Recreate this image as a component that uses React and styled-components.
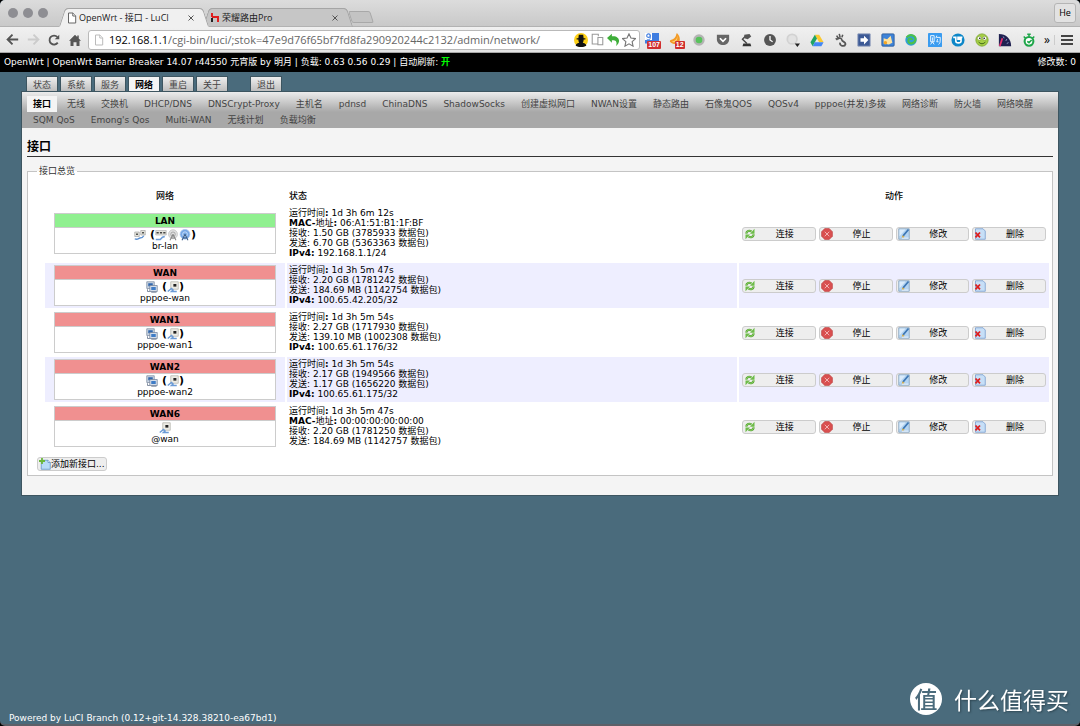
import React from 'react';
import styled, { createGlobalStyle, ThemeProvider } from 'styled-components';

const theme = {
    ui: '"DejaVu Sans", Verdana, "Noto Sans CJK SC", sans-serif',
    chrome: '"Open Sans", "Noto Sans CJK SC", sans-serif',
    page: '#4a6b7c',
    panel: '#f4f4f4',
    up: '#90f090',
    down: '#f09090',
    stripe: '#eeeeff',
};

const GlobalStyle = createGlobalStyle`
    * {
        box-sizing: border-box;
    }
    html {
        background: #000;
    }
    body {
        margin: 0;
        font-family: ${theme.ui};
        font-size: 9px;
        line-height: 10px;
        color: #000;
    }
    button, input {
        font: inherit;
        color: inherit;
        margin: 0;
        padding: 0;
    }
    svg {
        display: block;
        flex: none;
    }
`;

const Shell = styled.div`
    display: flex;
    flex-direction: column;
    min-height: 100vh;
    border-radius: 5px;
    overflow: hidden;
    background: ${props => props.theme.page};
    border-bottom: 2px solid #5d6068;
`;

/* browser chrome */

const TabStrip = styled.div`
    display: flex;
    align-items: flex-end;
    height: 27px;
    padding: 0 4px 0 8px;
    font-family: ${props => props.theme.chrome};
    background: linear-gradient(#dcdcdc, #c9c9c9);
    border-bottom: 1px solid #b2b2b2;
`;

const Lights = styled.div`
    display: flex;
    gap: 5px;
    align-self: center;
    margin-right: 14px;
    span {
        width: 10px;
        height: 10px;
        border-radius: 50%;
        background: #8e8e93;
    }
`;

const Tab = styled.div`
    position: relative;
    display: flex;
    align-items: center;
    width: 144px;
    height: 19px;
    margin-bottom: -1px;
    padding: 0 12px 0 5px;
    color: #222;
    z-index: ${props => (props.$active ? 2 : 1)};
    :before, :after {
        content: '';
        position: absolute;
        z-index: -1;
        top: 0;
        bottom: 0;
        width: 60%;
        background: ${props => (props.$active ? '#f0f0f0' : '#c6c6c6')};
        border: 1px solid #a5a5a5;
        border-bottom-color: ${props => (props.$active ? '#f0f0f0' : '#b2b2b2')};
    }
    :before {
        left: 0;
        border-right: 0;
        border-radius: 4px 0 0 0;
        transform: skewX(-18deg);
    }
    :after {
        right: 0;
        border-left: 0;
        border-radius: 0 4px 0 0;
        transform: skewX(18deg);
    }
    span {
        flex: 1;
        margin-left: 2px;
        white-space: nowrap;
    }
`;

const CloseButton = styled.button`
    border: 0;
    background: none;
`;

const NewTab = styled.button`
    width: 22px;
    height: 12px;
    margin: 0 0 3px;
    border: 1px solid #a8a8a8;
    border-radius: 2px;
    background: #c3c3c3;
    transform: skewX(18deg);
`;

const UserButton = styled.button`
    align-self: center;
    width: 22px;
    height: 20px;
    margin-left: auto;
    border: 1px solid #b5b5b5;
    border-radius: 3px;
    background: #e2e2e2;
`;

const Toolbar = styled.div`
    display: flex;
    align-items: center;
    height: 26px;
    padding: 0 7px 0 6px;
    background: linear-gradient(#f0f0f0, #e3e3e3);
    border-bottom: 1px solid #a8a8a8;
`;

const IconButton = styled.button`
    display: flex;
    margin-right: ${props => props.$gap || 0}px;
    border: 0;
    background: none;
`;

const Omnibox = styled.div`
    display: flex;
    flex: 1;
    align-items: center;
    height: 20px;
    padding: 0 3px 0 5px;
    margin-right: 4px;
    border: 1px solid #b9b9b9;
    border-radius: 3px;
    background: #fff;
    font-family: ${props => props.theme.chrome};
    font-size: 11px;
    line-height: 16px;
    label {
        margin-left: 5px;
    }
    input {
        flex: 1;
        min-width: 0;
        border: 0;
        outline: 0;
        color: #666;
        background: none;
    }
`;

const Extensions = styled.div`
    display: flex;
    justify-content: space-between;
    width: 393px;
    margin-right: 7px;
`;

const More = styled.button`
    width: 11px;
    margin-right: 6px;
    border: 0;
    border-right: 1px solid #ccc;
    background: none;
    text-align: left;
    font-family: ${props => props.theme.chrome};
    font-size: 12px;
`;

/* LuCI page */

const StatusBar = styled.header`
    display: flex;
    justify-content: space-between;
    padding: 4px 4px 5px;
    background: #000;
    color: #fff;
    a {
        color: #0f0;
        font-weight: bold;
        text-decoration: none;
    }
`;

const MainMenu = styled.nav`
    display: flex;
    gap: 4px;
    margin: 4px 27px 0;
    a {
        padding: 3px 6px 2px;
        border: 1px solid #3d5560;
        border-bottom: 0;
        margin: 0 -1px;
        background: linear-gradient(#eee, #bbb);
        color: #444;
        text-decoration: none;
    }
    a.active {
        background: ${props => props.theme.panel};
        color: #000;
        font-weight: bold;
    }
    a.logout {
        margin-left: 19px;
    }
`;

const Panel = styled.main`
    margin: 0 22px;
    background: ${props => props.theme.panel};
    box-shadow: 0 0 0 1px #3d5560;
`;

const SubMenu = styled.nav`
    display: flex;
    flex-wrap: wrap;
    column-gap: 4px;
    padding: 4px 5px 0;
    background: linear-gradient(#ececec, #a8a8a8 20px);
    a {
        padding: 3px 6px;
        color: #444;
        text-decoration: none;
        white-space: nowrap;
    }
    a.active {
        background: ${props => props.theme.panel};
        color: #000;
        font-weight: bold;
    }
`;

const Content = styled.div`
    padding: 11px 5px 19px;
    h2 {
        margin: 0 0 8px;
        border-bottom: 1px solid #333;
        font-size: 12px;
        line-height: 17px;
    }
`;

const Section = styled.fieldset`
    min-width: 0;
    margin: 0;
    padding: 9px 1px 4px 9px;
    border: 1px solid #c4c4c4;
    background: #fff;
    legend {
        padding: 0 2px;
        line-height: 12px;
        color: #333;
    }
`;

const InterfaceTable = styled.table`
    width: calc(100% - 6px);
    margin-left: 6px;
    table-layout: fixed;
    border-collapse: separate;
    border-spacing: 2px;
    th {
        padding: 3px 2px;
        font-weight: 500;
    }
    th:nth-child(2) {
        text-align: left;
    }
    td {
        padding: 2px;
    }
    td:nth-child(2) {
        padding-bottom: 3px;
    }
    .network {
        width: 24%;
    }
    .actions {
        width: 31%;
    }
`;

const InterfaceRow = styled.tr`
    background: ${props => (props.$striped ? props.theme.stripe : '#fff')};
`;

const NetworkBox = styled.div`
    margin: 0 7px;
    padding-bottom: 2px;
    border: 1px solid #ccc;
    background: #fff;
    text-align: center;
    strong {
        display: block;
        padding: 2px 0 1px;
        border-bottom: 1px solid #ccc;
        background: ${props => (props.$up ? props.theme.up : props.theme.down)};
    }
`;

const DeviceIcons = styled.div`
    display: flex;
    justify-content: center;
    align-items: center;
    height: 13px;
    font-weight: bold;
    font-size: 11px;
    span {
        margin-left: 4px;
    }
`;

const Status = styled.div`
    white-space: nowrap;
`;

const Actions = styled.div`
    display: flex;
    gap: 3px;
    padding: 0 1px;
`;

const Button = styled.button`
    display: flex;
    align-items: center;
    flex: ${props => (props.$fill ? 1 : 'none')};
    height: 14px;
    padding: 0 1px;
    border: 1px solid #ccc;
    border-radius: 3px;
    background: #eee;
    span {
        flex: 1;
        text-align: center;
        white-space: nowrap;
    }
`;

const AddRow = styled.div`
    display: flex;
    margin-top: 6px;
`;

const Footer = styled.footer`
    margin-top: auto;
    padding: 0 9px 1px;
    color: #fff;
`;

const Watermark = styled.div`
    position: fixed;
    right: 11px;
    bottom: 11px;
    display: flex;
    align-items: center;
    gap: 12px;
    color: #fff;
    font-family: "Noto Sans CJK SC", sans-serif;
    font-size: 23px;
    line-height: 32px;
    text-shadow: 1px 1px 2px #2c4450;
    b {
        width: 32px;
        height: 32px;
        border-radius: 50%;
        background: #fff;
        color: ${props => props.theme.page};
        font-size: 23px;
        font-weight: 500;
        line-height: 31px;
        text-align: center;
        text-shadow: none;
    }
`;

const Svg = ({ size = 12, box = 16, children }) => (
    <svg width={size} height={size} viewBox={`0 0 ${box} ${box}`} aria-hidden="true">{children}</svg>
);

const PageIcon = ({ color = '#666' }) => (
    <svg width="10" height="12" viewBox="0 0 10 12" fill="#fff" stroke={color} aria-hidden="true">
        <path d="M1.5 1h4.5l2.7 2.8v7.2H1.5z" />
        <path d="M5.8 1v3h2.9" />
    </svg>
);

const actionIcons = {
    connect: (
        <Svg>
            <path d="M3 7.5C3.500 4 7 2.800 10 4.500" fill="none" stroke="#5aa637" strokeWidth="3" />
            <path d="M3 7.5C3.500 4 7 2.800 10 4.500" fill="none" stroke="#9bdc78" strokeWidth="1" />
            <path d="M14 1v6.500H8z" fill="#6cbb48" />
            <path d="M13 8.500C12.500 12 9 13.200 6 11.500" fill="none" stroke="#5aa637" strokeWidth="3" />
            <path d="M13 8.500C12.500 12 9 13.200 6 11.500" fill="none" stroke="#9bdc78" strokeWidth="1" />
            <path d="M2 15V8.500h6z" fill="#6cbb48" />
        </Svg>
    ),
    stop: (
        <Svg>
            <path d="M5 .8h6L15.200 5v6L11 15.200H5L.8 11V5z" fill="#d94f4f" stroke="#c05050" strokeLinejoin="round" />
            <path d="M5 5l6 6M11 5l-6 6" stroke="#f3b4b4" strokeWidth="1.300" />
        </Svg>
    ),
    edit: (
        <Svg>
            <path d="M1 1h14v14H1z" fill="#b5d5f3" stroke="#7f9bb5" />
            <path d="M2 2h8L2 11z" fill="#dcecfb" />
            <path d="M14 2L7.500 9.500 6 13" fill="none" stroke="#3f78b4" strokeWidth="2.400" />
            <path d="M5 13.500l1-4 3 2.500z" fill="#e8b64a" />
            <path d="M5 13.500h9" stroke="#e9f3fd" strokeWidth="1.400" />
        </Svg>
    ),
    remove: (
        <Svg>
            <path d="M2 1h10l3 3v11H2z" fill="#c7dff7" stroke="#6f95cc" />
            <path d="M2 6l6 6.500M8 6l-6 6.500" stroke="#dd1f1f" strokeWidth="2.400" />
        </Svg>
    ),
    add: (
        <Svg>
            <path d="M3 3h9l3 3v9H3z" fill="#b8dcf8" stroke="#5a8fc4" />
            <path d="M12 3v3h3" fill="#fff" stroke="#5a8fc4" />
            <path d="M4 0v8M0 4h8" stroke="#6bb83a" strokeWidth="2.400" />
        </Svg>
    ),
};

const deviceIcons = {
    bridge: (
        <Svg>
            <path d="M1 4h6v6H1zM9 2h6v6H9z" fill="#e4e4dc" stroke="#999" strokeWidth=".8" />
            <path d="M3 6h2v2H3zM11 4h2v2h-2z" fill="#222" />
            <path d="M1 13c4 2 5-1 7-1s4-1 5-3" stroke="#5b8fd0" strokeWidth="1.800" fill="none" />
        </Svg>
    ),
    lanSwitch: (
        <Svg>
            <path d="M1 2h14v6H1z" fill="#e4e4dc" stroke="#aaa" strokeWidth=".8" />
            <path d="M2 4h3v2H2zM6.500 4h3v2h-3zM11 4h3v2h-3z" fill="#444" />
            <path d="M1 14h6l3-3 3-1" stroke="#6b9bd6" strokeWidth="2" fill="none" />
        </Svg>
    ),
    wifiOff: (
        <Svg>
            <circle cx="8" cy="7" r="6" fill="#e0e0e0" stroke="#c4c4c4" />
            <circle cx="8" cy="7" r="3" fill="none" stroke="#999" />
            <path d="M8 7l-4 8M8 7l4 8M6 12h4" stroke="#888" strokeWidth="1.400" fill="none" />
        </Svg>
    ),
    wifi: (
        <Svg>
            <circle cx="8" cy="7" r="6.500" fill="#77a8e6" stroke="#a8c6ee" />
            <circle cx="8" cy="7" r="3.200" fill="none" stroke="#d8e8fb" />
            <path d="M8 7l-4 8M8 7l4 8M6 12h4" stroke="#3f5f88" strokeWidth="1.400" fill="none" />
        </Svg>
    ),
    tunnel: (
        <Svg>
            <path d="M1 1h10v9H1z" fill="#c9d4e2" stroke="#7d8ba0" />
            <path d="M3 3h6v4H3z" fill="#2f66ad" />
            <path d="M5 6h10v8H5z" fill="#d5deea" stroke="#74839a" />
            <path d="M7 8h6v4H7z" fill="#3f7cc6" />
            <path d="M2 11v3h3M7 15h7" stroke="#5c6c84" fill="none" />
        </Svg>
    ),
    ethernet: (
        <Svg>
            <path d="M5 1h10v10H5z" fill="#ecebe4" stroke="#b4b4ac" />
            <path d="M8.500 4h4v3.500h-4z" fill="#222" />
            <path d="M1 14l5-4 2 2-2 2h7" stroke="#6b9bd6" strokeWidth="2" fill="none" />
        </Svg>
    ),
};

const extensions = [
    ['translate', <><path d="M0 0h16v12H0z" fill="#3f7de0" /><path d="M0 0h8v8H0z" fill="#fff" /><circle cx="4" cy="3" r="2" fill="none" stroke="#3f7de0" strokeWidth="1.300" /><path d="M6 2v4c0 2-3 2-4 1" stroke="#3f7de0" fill="none" /></>, '107'],
    ['flame', <><path d="M9 0c3 3 4 6 3 10-2 4-8 3-11 0 0-3 3-2 5-4s2-4 3-6z" fill="#f39a26" /><path d="M9 2c1 4-1 7-6 8 5 2 8-3 6-8z" fill="#fcd277" /></>, '12'],
    ['record', <><circle cx="8" cy="8" r="6.500" fill="#b4b4b4" /><circle cx="8" cy="8" r="3.800" fill="#58c25c" /></>],
    ['pocket', <><path d="M1 2h14v5c0 9-14 9-14 0z" fill="#666" /><path d="M4.500 6L8 9.500 11.500 6" stroke="#fff" strokeWidth="2" fill="none" /></>],
    ['lamp', <><path d="M7 4l-3 3 5 5" stroke="#444" strokeWidth="1.600" fill="none" /><path d="M6 2l6-1 2 3-4 3-4-1z" fill="#555" /><path d="M5 12h8l1 3H4z" fill="#333" /></>],
    ['history', <><circle cx="8" cy="8" r="6.800" fill="#555" /><path d="M8 3.500V8l3 2" stroke="#fff" strokeWidth="1.500" fill="none" /></>],
    ['circle', <><circle cx="7" cy="7" r="5.500" fill="#e2e2e2" stroke="#d2d2d2" strokeWidth="2" /><path d="M10 12h6l-3 4z" fill="#222" /></>],
    ['drive', <><path d="M5.500 2h5l5 8.500h-5z" fill="#fbc92f" /><path d="M5.500 2L8 6.300 3 15 .5 10.500z" fill="#1fa463" /><path d="M5.500 10.500h10L13 15H3z" fill="#4387f4" /></>],
    ['foot', <><path d="M4 7c2-2 5-1 5 1s5 2 4 5-7 2-6-2" fill="none" stroke="#555" strokeWidth="2" /><path d="M2 6l2 2M3 3l2 3M6 1l1 4M10 2L9 5" stroke="#555" strokeWidth="1.800" /></>],
    ['arrow', <><path d="M1 1h14v14H1z" fill="#3d5a96" stroke="#8796b8" /><path d="M4 6h4V3l5 5-5 5v-3H4z" fill="#fff" /></>],
    ['bell', <><rect x="1" y="1" width="14" height="14" rx="1" fill="#3e83d8" stroke="#2b5b9c" /><path d="M3 6l4 1 4-4 2 8-4 2-6-1z" fill="#fde2a0" /><circle cx="5" cy="11" r="2" fill="#f4a623" /></>],
    ['swirl', <><circle cx="8" cy="8" r="6.500" fill="#2f9fd8" /><path d="M3 5c4-5 11-2 10 3s-8 5-8 1 4-3 4-1" fill="none" stroke="#4cc04a" strokeWidth="2.400" /></>],
    ['shop', <><rect width="16" height="16" rx="1" fill="#3a9cf0" /><path d="M3 3h4v7H3zM5 5v4M3 13l2-3 2 3M10 3L9 6M10 5h4c0 5 0 7-2 8M11 7l-1 3h2" stroke="#fff" fill="none" /></>],
    ['bird', <><circle cx="8" cy="8" r="7.500" fill="#0d87c8" /><path d="M2.500 5h3v4c0 3 6 3 6 0V7H8V5h5" stroke="#fff" strokeWidth="1.800" fill="none" /></>],
    ['frog', <><circle cx="8" cy="8" r="7" fill="#a6cf45" stroke="#7da82e" /><circle cx="5" cy="6" r="2.300" fill="#fff" stroke="#6d8f2a" strokeWidth=".6" /><circle cx="11" cy="6" r="2.300" fill="#fff" stroke="#6d8f2a" strokeWidth=".6" /><circle cx="5.500" cy="6" r=".9" /><circle cx="10.500" cy="6" r=".9" /><path d="M4 10c2 3 6 3 8 0" stroke="#335c12" fill="none" /></>],
    ['gauge', <><path d="M1 1c8 0 14 5 14 14H1z" fill="#1f2050" /><path d="M2 15L5 6" stroke="#e53070" strokeWidth="2" /><path d="M6 4l1 2M10 7l-1 2M12 11l-2 1" stroke="#9fa7d8" /></>],
    ['timer', <><circle cx="8" cy="9.500" r="5" fill="#fff" stroke="#1fa64a" strokeWidth="2.400" /><path d="M6 1.500h4M8 1v3M2 4l2 2M14 4l-2 2M6 9.500l2 1.500 3-3" stroke="#1fa64a" strokeWidth="1.800" fill="none" /></>],
];

const Badge = styled.span`
    position: absolute;
    right: -1px;
    bottom: -2px;
    padding: 0 1px;
    border-radius: 1px;
    background: #d02f2f;
    color: #fff;
    font-family: "Liberation Sans", sans-serif;
    font-size: 7px;
    font-weight: bold;
    line-height: 8px;
`;

const ExtensionButton = styled(IconButton)`
    position: relative;
    padding: 0 1px;
`;

const mainMenu = ['状态', '系统', '服务', '网络', '重启', '关于', '退出'];

const subMenu = [
    '接口', '无线', '交换机', 'DHCP/DNS', 'DNSCrypt-Proxy', '主机名', 'pdnsd', 'ChinaDNS', 'ShadowSocks',
    '创建虚拟网口', 'NWAN设置', '静态路由', '石像鬼QOS', 'QOSv4', 'pppoe(并发)多拨', '网络诊断', '防火墙',
    '网络唤醒', 'SQM QoS', "Emong's Qos", 'Multi-WAN', '无线计划', '负载均衡',
];

const interfaces = [
    { name: 'LAN', up: true, device: 'br-lan', icon: 'bridge', members: ['lanSwitch', 'wifiOff', 'wifi'], uptime: '1d 3h 6m 12s', mac: '06:A1:51:B1:1F:BF', rx: '1.50 GB (3785933 数据包)', tx: '6.70 GB (5363363 数据包)', ipv4: '192.168.1.1/24' },
    { name: 'WAN', device: 'pppoe-wan', icon: 'tunnel', members: ['ethernet'], uptime: '1d 3h 5m 47s', rx: '2.20 GB (1781242 数据包)', tx: '184.69 MB (1142754 数据包)', ipv4: '100.65.42.205/32' },
    { name: 'WAN1', device: 'pppoe-wan1', icon: 'tunnel', members: ['ethernet'], uptime: '1d 3h 5m 54s', rx: '2.27 GB (1717930 数据包)', tx: '139.10 MB (1002308 数据包)', ipv4: '100.65.61.176/32' },
    { name: 'WAN2', device: 'pppoe-wan2', icon: 'tunnel', members: ['ethernet'], uptime: '1d 3h 5m 54s', rx: '2.17 GB (1949566 数据包)', tx: '1.17 GB (1656220 数据包)', ipv4: '100.65.61.175/32' },
    { name: 'WAN6', device: '@wan', icon: 'ethernet', uptime: '1d 3h 5m 47s', mac: '00:00:00:00:00:00', rx: '2.20 GB (1781250 数据包)', tx: '184.69 MB (1142757 数据包)' },
];

const Browser = () => (
    <div>
        <TabStrip>
            <Lights><span /><span /><span /></Lights>
            <Tab $active>
                <PageIcon />
                <span>OpenWrt - 接口 - LuCI</span>
                <CloseButton aria-label="Close tab">
                    <Svg size={6} box={6}><path d="M.5.5l5 5M5.500.5l-5 5" stroke="#555" /></Svg>
                </CloseButton>
            </Tab>
            <Tab>
                <Svg size={9} box={9}>
                    <path d="M1 0v4M1 4h6v5" stroke="#e02020" strokeWidth="2" fill="none" />
                    <path d="M1 5v4" stroke="#222" strokeWidth="2" />
                </Svg>
                <span>荣耀路由Pro</span>
                <CloseButton aria-label="Close tab">
                    <Svg size={6} box={6}><path d="M.5.5l5 5M5.500.5l-5 5" stroke="#555" /></Svg>
                </CloseButton>
            </Tab>
            <NewTab aria-label="New tab" />
            <UserButton>He</UserButton>
        </TabStrip>
        <Toolbar>
            <IconButton $gap={8} aria-label="Back">
                <Svg size={13}><path d="M15 8H3M8 2L2 8l6 6" fill="none" stroke="#555" strokeWidth="2.400" /></Svg>
            </IconButton>
            <IconButton $gap={8} aria-label="Forward">
                <Svg size={13}><path d="M1 8h12M8 2l6 6-6 6" fill="none" stroke="#ccc" strokeWidth="2.400" /></Svg>
            </IconButton>
            <IconButton $gap={9} aria-label="Reload">
                <Svg size={12}><path d="M13 11.500A6 6 0 1 1 12.500 4" fill="none" stroke="#555" strokeWidth="2.400" /><path d="M15 1v6H9z" fill="#555" /></Svg>
            </IconButton>
            <IconButton $gap={7} aria-label="Home">
                <Svg size={12}><path d="M8 1L0 9h2v7h4v-5h4v5h4V9h2l-3-3V2h-2v2z" fill="#555" /></Svg>
            </IconButton>
            <Omnibox>
                <PageIcon color="#bbb" />
                <label htmlFor="address">192.168.1.1</label>
                <input id="address" type="text" defaultValue="/cgi-bin/luci/;stok=47e9d76f65bf7fd8fa290920244c2132/admin/network/" />
                <IconButton $gap={3} aria-label="Agent">
                    <Svg size={14}><circle cx="8" cy="8" r="8" fill="#fdd017" /><path d="M5.500 2h5l.5 4h2v1.500h-2c0 2-.5 3-1 3.500 3 .5 4 2 4 3.500-3 2-9 2-12 0C2 13 3 11.500 6 11c-.5-.5-1-1.500-1-3.500H3V6h2z" fill="#111" /></Svg>
                </IconButton>
                <IconButton $gap={3} aria-label="Devices">
                    <Svg size={13}><path d="M9 4V1.500H1.500v12H8M8.500 5.500h6v9h-6z" fill="none" stroke="#999" strokeWidth="1.300" /></Svg>
                </IconButton>
                <IconButton $gap={2} aria-label="Undo">
                    <Svg size={13}><path d="M0 6l6-5v3c9-1 12 7 5 12 2-5 0-8-5-7v3z" fill="#3fae3a" /></Svg>
                </IconButton>
                <IconButton aria-label="Bookmark">
                    <Svg size={14}><path d="M8 1l2.200 4.800 5.200.6-3.800 3.500 1 5.100L8 12.400 3.400 15l1-5.100L.6 6.400l5.200-.6z" fill="#fff" stroke="#777" strokeWidth="1.300" /></Svg>
                </IconButton>
            </Omnibox>
            <Extensions>
                {extensions.map(([name, art, count]) => (
                    <ExtensionButton key={name} aria-label={name}>
                        <Svg size={14}>{art}</Svg>
                        {count && <Badge>{count}</Badge>}
                    </ExtensionButton>
                ))}
            </Extensions>
            <More aria-label="More">»</More>
            <IconButton aria-label="Menu">
                <Svg size={12} box={12}><path d="M0 2h12M0 6h12M0 10h12" stroke="#444" strokeWidth="2" /></Svg>
            </IconButton>
        </Toolbar>
    </div>
);

const Interface = ({ item, striped }) => (
    <InterfaceRow $striped={striped}>
        <td>
            <NetworkBox $up={item.up}>
                <strong>{item.name}</strong>
                <DeviceIcons>
                    {deviceIcons[item.icon]}
                    {item.members && <span>(</span>}
                    {item.members && item.members.map(icon => <React.Fragment key={icon}>{deviceIcons[icon]}</React.Fragment>)}
                    {item.members && ')'}
                </DeviceIcons>
                {item.device}
            </NetworkBox>
        </td>
        <td>
            <Status>
                <div>运行时间<b>:</b> {item.uptime}</div>
                {item.mac && <div><b>MAC-</b>地址<b>:</b> {item.mac}</div>}
                <div>接收: {item.rx}</div>
                <div>发送: {item.tx}</div>
                {item.ipv4 && <div><b>IPv4:</b> {item.ipv4}</div>}
            </Status>
        </td>
        <td>
            <Actions>
                <Button $fill>{actionIcons.connect}<span>连接</span></Button>
                <Button $fill>{actionIcons.stop}<span>停止</span></Button>
                <Button $fill>{actionIcons.edit}<span>修改</span></Button>
                <Button $fill>{actionIcons.remove}<span>删除</span></Button>
            </Actions>
        </td>
    </InterfaceRow>
);

const menuClass = label => {
    if (label === '网络' || label === '接口') return 'active';
    if (label === '退出') return 'logout';
    return undefined;
};

const App = () => (
    <ThemeProvider theme={theme}>
        <GlobalStyle />
        <Shell>
            <Browser />
            <StatusBar>
                <span>OpenWrt | OpenWrt Barrier Breaker 14.07 r44550 元宵版 by 明月 | 负载: 0.63 0.56 0.29 | 自动刷新: <a href="#refresh">开</a></span>
                <span>修改数: 0</span>
            </StatusBar>
            <MainMenu>
                {mainMenu.map(label => <a href="#menu" className={menuClass(label)} key={label}>{label}</a>)}
            </MainMenu>
            <Panel>
                <SubMenu>
                    {subMenu.map(label => <a href="#submenu" className={menuClass(label)} key={label}>{label}</a>)}
                </SubMenu>
                <Content>
                    <h2>接口</h2>
                    <Section>
                        <legend>接口总览</legend>
                        <InterfaceTable>
                            <thead>
                                <tr>
                                    <th className="network">网络</th>
                                    <th>状态</th>
                                    <th className="actions">动作</th>
                                </tr>
                            </thead>
                            <tbody>
                                {interfaces.map((item, index) => <Interface item={item} striped={index % 2 === 1} key={item.name} />)}
                            </tbody>
                        </InterfaceTable>
                        <AddRow>
                            <Button>{actionIcons.add}<span>添加新接口...</span></Button>
                        </AddRow>
                    </Section>
                </Content>
            </Panel>
            <Footer>Powered by LuCI Branch (0.12+git-14.328.38210-ea67bd1)</Footer>
            <Watermark><b>值</b>什么值得买</Watermark>
        </Shell>
    </ThemeProvider>
);

export default App;
